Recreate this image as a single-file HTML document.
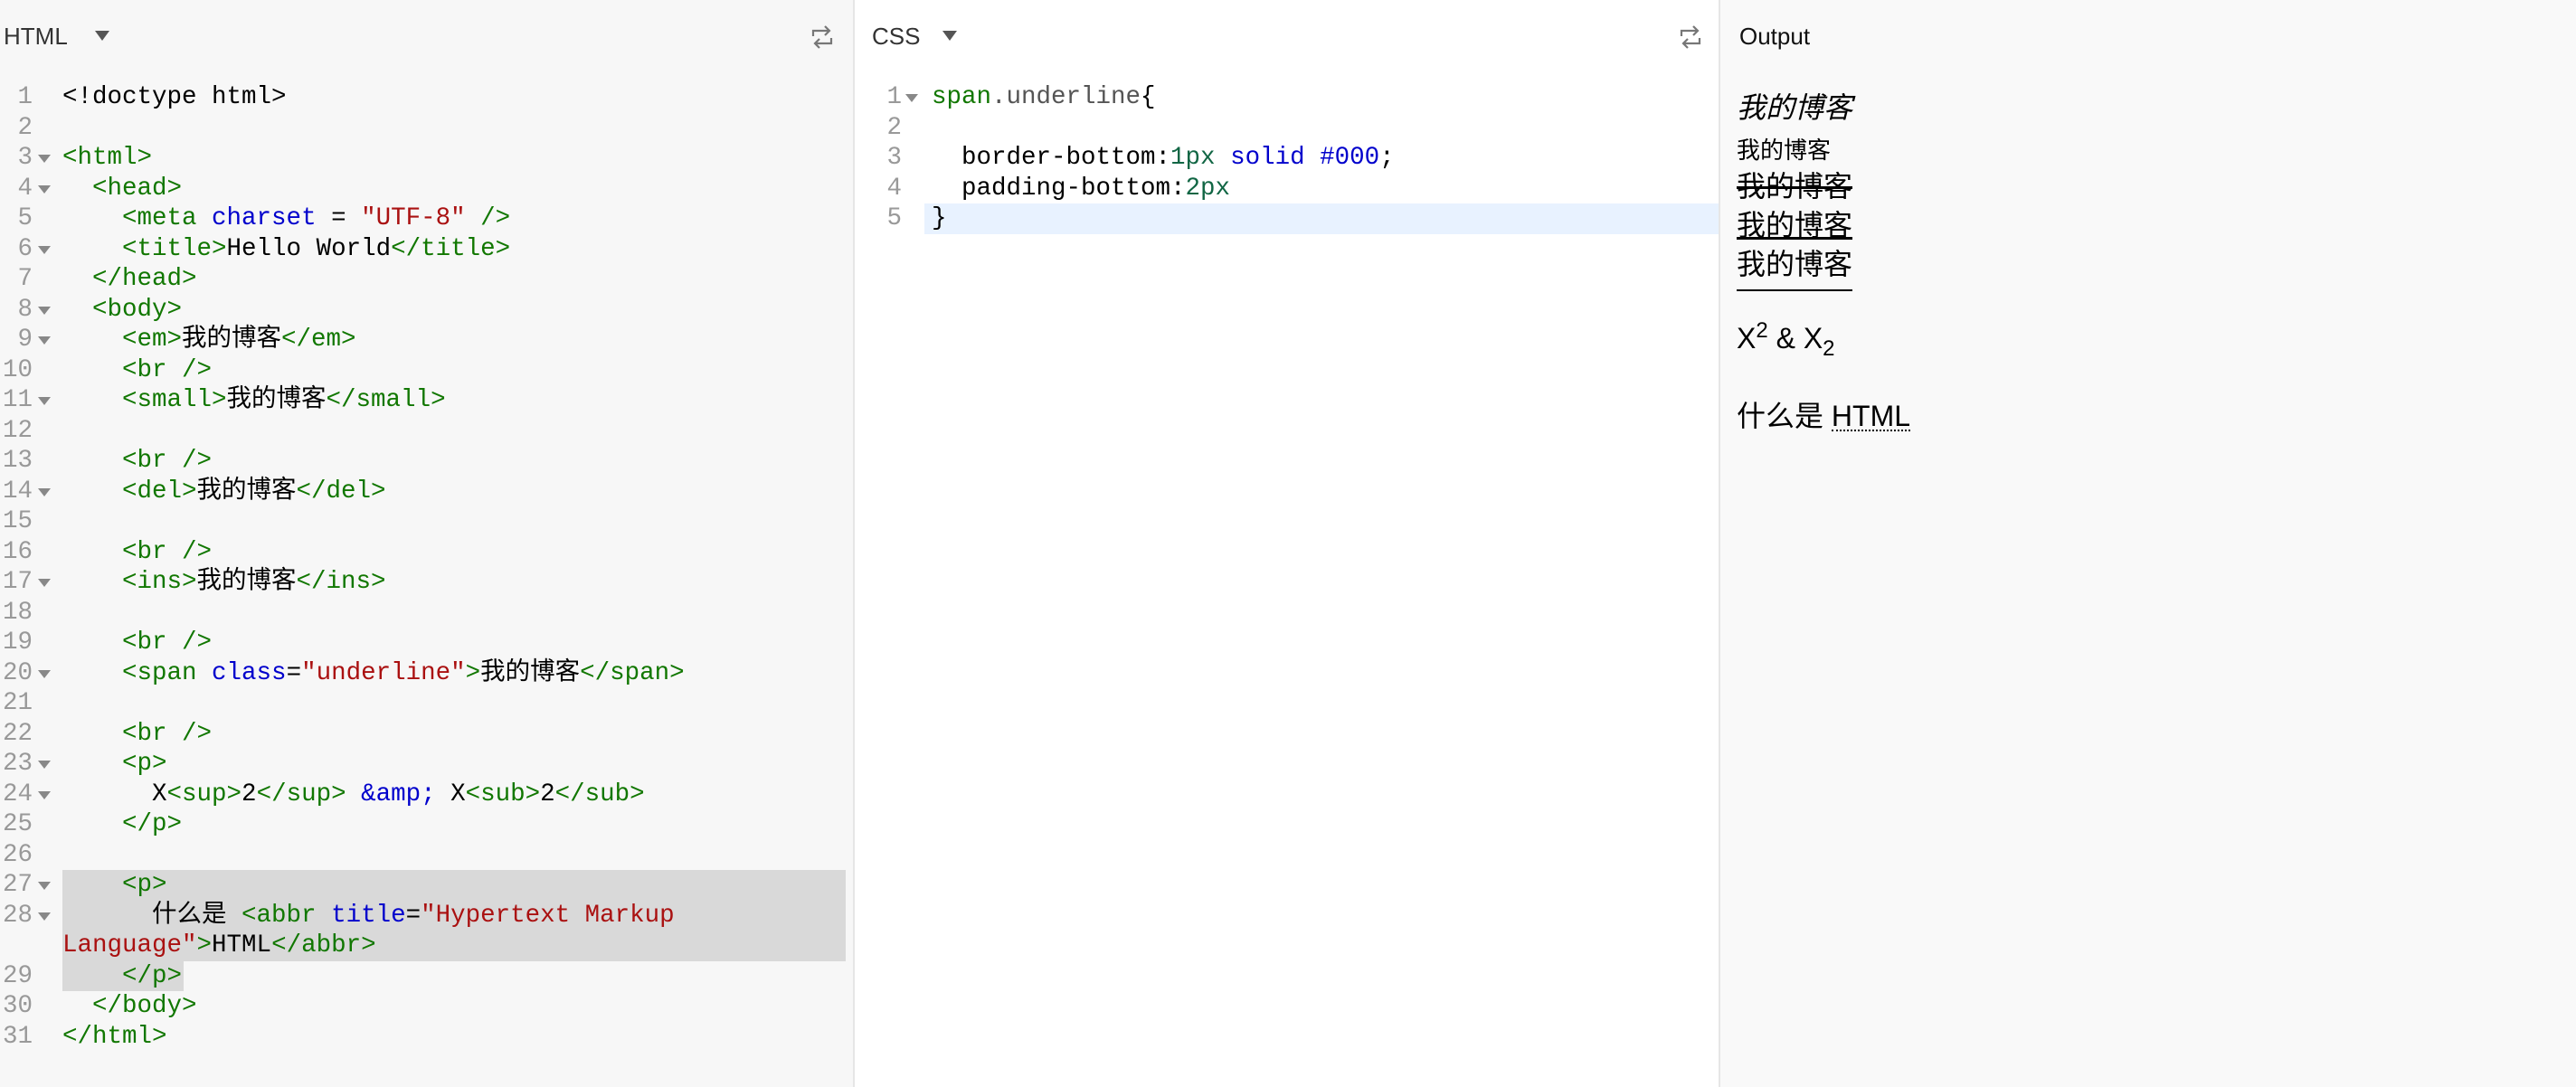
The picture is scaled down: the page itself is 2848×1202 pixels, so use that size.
<!DOCTYPE html>
<html><head><meta charset="utf-8"><style>
html,body{margin:0;overflow:hidden}
body{width:2848px;height:1202px;position:relative;font-family:"Liberation Sans","Noto Sans CJK SC",sans-serif;background:#fff}
.p{position:absolute;top:0;height:1202px}
#h{left:0;width:943px;background:#f7f7f7;border-right:2px solid #e6e6e6}
#c{left:945px;width:955px;background:#fff;border-right:2px solid #e6e6e6}
#o{left:1902px;width:946px;background:#f9f9f9}
.hd{position:absolute;top:24px;font-size:26px;color:#333;line-height:32px}
.tri{position:absolute;top:34px;width:0;height:0;border-left:8px solid transparent;border-right:8px solid transparent;border-top:11px solid #555}
.code{position:absolute;top:91px;left:0;right:0;font-family:"Liberation Mono","Noto Sans CJK SC",monospace;font-size:27.5px;color:#000}
.r{height:33.5px;line-height:33.5px;position:relative}
.n{position:absolute;left:0;width:36px;text-align:right;color:#999}
.f{position:absolute;left:42px;top:13px;border-left:7px solid transparent;border-right:7px solid transparent;border-top:9px solid #888}
.t{position:absolute;left:69px;white-space:pre}
.g{color:#170}.b{color:#00c}.s{color:#a11}.nm{color:#164}.q{color:#555}
.hl{background:#d9d9d9}
.o{position:absolute;left:1920px;font-size:32px;line-height:40px;color:#000;white-space:nowrap}
</style></head><body>
<div class="p" id="h">
<div class="hd" style="left:4px">HTML</div><div class="tri" style="left:105px"></div>
<svg style="position:absolute;left:895px;top:26px" width="28" height="30" viewBox="0 0 28 30" fill="none" stroke="#777" stroke-width="2.2"><path d="M4 14 V8 H22 M17 3 L22 8 L17 13"/><path d="M24 16 V22 H6 M11 17 L6 22 L11 27"/></svg>
<div class="code"><div class="r"><span class="n">1</span><span class="t">&lt;!doctype html&gt;</span></div>
<div class="r"><span class="n">2</span></div>
<div class="r"><span class="n">3</span><span class="f"></span><span class="t g">&lt;html&gt;</span></div>
<div class="r"><span class="n">4</span><span class="f"></span><span class="t">  <span class="g">&lt;head&gt;</span></span></div>
<div class="r"><span class="n">5</span><span class="t">    <span class="g">&lt;meta</span> <span class="b">charset</span> = <span class="s">"UTF-8"</span> <span class="g">/&gt;</span></span></div>
<div class="r"><span class="n">6</span><span class="f"></span><span class="t">    <span class="g">&lt;title&gt;</span>Hello World<span class="g">&lt;/title&gt;</span></span></div>
<div class="r"><span class="n">7</span><span class="t">  <span class="g">&lt;/head&gt;</span></span></div>
<div class="r"><span class="n">8</span><span class="f"></span><span class="t">  <span class="g">&lt;body&gt;</span></span></div>
<div class="r"><span class="n">9</span><span class="f"></span><span class="t">    <span class="g">&lt;em&gt;</span>我的博客<span class="g">&lt;/em&gt;</span></span></div>
<div class="r"><span class="n">10</span><span class="t">    <span class="g">&lt;br /&gt;</span></span></div>
<div class="r"><span class="n">11</span><span class="f"></span><span class="t">    <span class="g">&lt;small&gt;</span>我的博客<span class="g">&lt;/small&gt;</span></span></div>
<div class="r"><span class="n">12</span></div>
<div class="r"><span class="n">13</span><span class="t">    <span class="g">&lt;br /&gt;</span></span></div>
<div class="r"><span class="n">14</span><span class="f"></span><span class="t">    <span class="g">&lt;del&gt;</span>我的博客<span class="g">&lt;/del&gt;</span></span></div>
<div class="r"><span class="n">15</span></div>
<div class="r"><span class="n">16</span><span class="t">    <span class="g">&lt;br /&gt;</span></span></div>
<div class="r"><span class="n">17</span><span class="f"></span><span class="t">    <span class="g">&lt;ins&gt;</span>我的博客<span class="g">&lt;/ins&gt;</span></span></div>
<div class="r"><span class="n">18</span></div>
<div class="r"><span class="n">19</span><span class="t">    <span class="g">&lt;br /&gt;</span></span></div>
<div class="r"><span class="n">20</span><span class="f"></span><span class="t">    <span class="g">&lt;span</span> <span class="b">class</span>=<span class="s">"underline"</span><span class="g">&gt;</span>我的博客<span class="g">&lt;/span&gt;</span></span></div>
<div class="r"><span class="n">21</span></div>
<div class="r"><span class="n">22</span><span class="t">    <span class="g">&lt;br /&gt;</span></span></div>
<div class="r"><span class="n">23</span><span class="f"></span><span class="t">    <span class="g">&lt;p&gt;</span></span></div>
<div class="r"><span class="n">24</span><span class="f"></span><span class="t">      X<span class="g">&lt;sup&gt;</span>2<span class="g">&lt;/sup&gt;</span> <span class="b">&amp;amp;</span> X<span class="g">&lt;sub&gt;</span>2<span class="g">&lt;/sub&gt;</span></span></div>
<div class="r"><span class="n">25</span><span class="t">    <span class="g">&lt;/p&gt;</span></span></div>
<div class="r"><span class="n">26</span></div>
<div class="r"><div class="hl" style="position:absolute;left:69px;width:866px;top:0;bottom:0"></div><span class="n">27</span><span class="f"></span><span class="t">    <span class="g">&lt;p&gt;</span></span></div>
<div class="r"><div class="hl" style="position:absolute;left:69px;width:866px;top:0;bottom:0"></div><span class="n">28</span><span class="f"></span><span class="t">      什么是 <span class="g">&lt;abbr</span> <span class="b">title</span>=<span class="s">"Hypertext Markup</span></span></div>
<div class="r"><div class="hl" style="position:absolute;left:69px;width:866px;top:0;bottom:0"></div><span class="t"><span class="s">Language"</span><span class="g">&gt;</span>HTML<span class="g">&lt;/abbr&gt;</span></span></div>
<div class="r"><div class="hl" style="position:absolute;left:69px;width:134px;top:0;bottom:0"></div><span class="n">29</span><span class="t">    <span class="g">&lt;/p&gt;</span></span></div>
<div class="r"><span class="n">30</span><span class="t">  <span class="g">&lt;/body&gt;</span></span></div>
<div class="r"><span class="n">31</span><span class="t"><span class="g">&lt;/html&gt;</span></span></div></div></div>
<div class="p" id="c">
<div class="hd" style="left:19px">CSS</div><div class="tri" style="left:97px"></div>
<svg style="position:absolute;left:910px;top:26px" width="28" height="30" viewBox="0 0 28 30" fill="none" stroke="#777" stroke-width="2.2"><path d="M4 14 V8 H22 M17 3 L22 8 L17 13"/><path d="M24 16 V22 H6 M11 17 L6 22 L11 27"/></svg>
<div class="code"><div class="r"><span class="n" style="width:52px">1</span><span class="f" style="left:56px"></span><span class="t" style="left:85px"><span class="g">span</span><span class="q">.underline</span>{</span></div>
<div class="r"><span class="n" style="width:52px">2</span></div>
<div class="r"><span class="n" style="width:52px">3</span><span class="t" style="left:85px">  border-bottom:<span class="nm">1px</span> <span class="b">solid</span> <span class="b">#000</span>;</span></div>
<div class="r"><span class="n" style="width:52px">4</span><span class="t" style="left:85px">  padding-bottom:<span class="nm">2px</span></span></div>
<div class="r" style="background:linear-gradient(to right,transparent 77px,#e8f2ff 77px)"><span class="n" style="width:52px">5</span><span class="t" style="left:85px">}</span></div></div></div>
<div class="p" id="o">
<div class="hd" style="left:21px;color:#111">Output</div>
</div>
<div class="o" style="top:99px;font-style:italic">我的博客</div>
<div class="o" style="top:146px;font-size:26px">我的博客</div>
<div class="o" style="top:186px;text-decoration:line-through">我的博客</div>
<div class="o" style="top:229px;text-decoration:underline">我的博客</div>
<div class="o" style="top:272px;border-bottom:2px solid #000;padding-bottom:8px">我的博客</div>
<div class="o" style="top:354px">X<sup style="font-size:24px;vertical-align:12px;line-height:0">2</sup> &amp; X<sub style="font-size:24px;vertical-align:-8px;line-height:0">2</sub></div>
<div class="o" style="top:440px">什么是 <span style="border-bottom:2px dotted #000;line-height:30px;display:inline-block">HTML</span></div>
</body></html>
